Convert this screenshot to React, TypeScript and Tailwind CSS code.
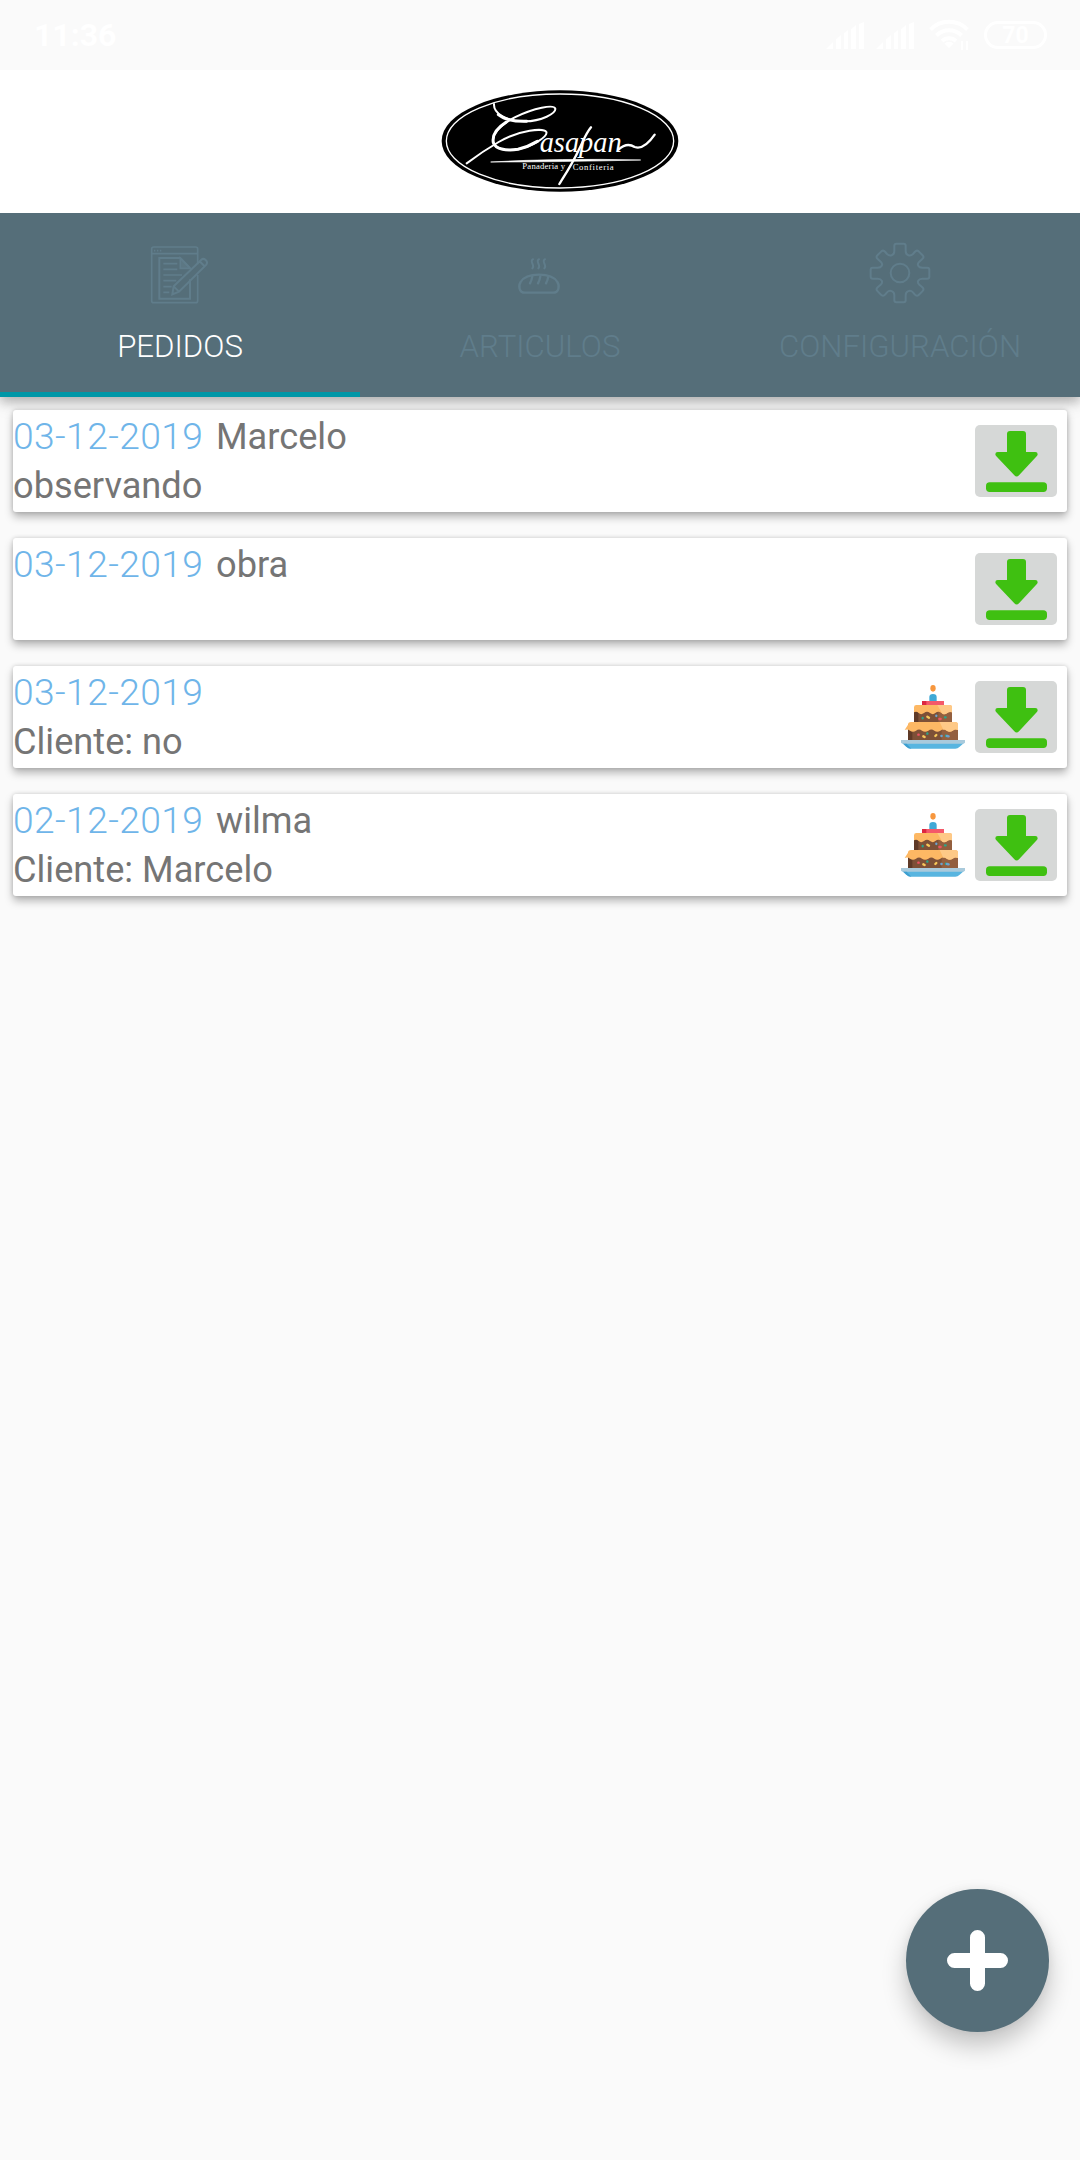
import type { ReactNode } from "react";

type Order = { date: string; name?: string; note?: string; cake?: boolean };

const orders: Order[] = [
  { date: "03-12-2019", name: "Marcelo", note: "observando" },
  { date: "03-12-2019", name: "obra" },
  { date: "03-12-2019", note: "Cliente: no", cake: true },
  { date: "02-12-2019", name: "wilma", note: "Cliente: Marcelo", cake: true },
];

function SignalIcon() {
  return (
    <svg className="h-[27px] w-[38px]" viewBox="0 0 38 27" fill="currentColor">
      <path d="M0 27l7-7v7zM10 17l5-4v14h-5zM18 11l4-3v19h-4zM25 7l5-4v24h-5zM33 2l5-2v27h-5z" />
    </svg>
  );
}

function WifiIcon() {
  return (
    <svg className="h-[32px] w-[40px]" viewBox="0 0 40 32" fill="none" stroke="currentColor" strokeWidth="4">
      <path d="M1.500 10.500a26 26 0 0 1 37 0M7.500 16.500a17.500 17.500 0 0 1 25 0M13 22a10 10 0 0 1 14 0" />
      <path d="M15.500 24.500a6.500 6.500 0 0 1 9 0L20 29z" fill="currentColor" stroke="none" />
      <path d="M33 22v9M38 22v9" strokeWidth="2" />
    </svg>
  );
}

function StatusBar() {
  return (
    <div className="flex h-[70px] items-center justify-between pr-[33px] pl-[34px] text-white">
      <span className="text-[32px] leading-none font-bold">11:36</span>
      <div className="flex items-center">
        <SignalIcon />
        <span className="w-3" />
        <SignalIcon />
        <span className="w-[15px]" />
        <WifiIcon />
        <span className="ml-[15px] flex h-[28px] w-[63px] items-center justify-center rounded-full border-[3px] border-white text-[23px] leading-none font-bold">
          70
        </span>
      </div>
    </div>
  );
}

function Logo() {
  return (
    <svg className="ml-10 h-[102px] w-[238px]" viewBox="33 30 714 306">
      <ellipse cx="390" cy="183" rx="355" ry="152" fill="#000" />
      <ellipse cx="390" cy="183" rx="341" ry="141" fill="none" stroke="#fff" strokeWidth="4" />
      <g fill="none" stroke="#fff" strokeLinecap="round">
        <path
          d="M192 72C190 98 225 124 284 124C335 124 378 100 376 86C372 72 312 84 254 112C205 138 184 166 190 188C196 207 226 214 264 208C312 198 354 168 349 156C342 144 270 148 206 186C170 207 142 226 110 250"
          strokeWidth="6"
        />
        <path
          d="M205 104C225 120 255 125 290 124M228 127C198 146 186 166 190 188C196 207 226 213 264 208C285 203 305 194 322 184"
          strokeWidth="9"
        />
        <path d="M483 142C468 160 460 182 448 206C430 246 408 280 388 312" strokeWidth="7" />
        <path d="M566 208C584 192 600 192 614 201C634 208 652 196 674 164" strokeWidth="7" />
      </g>
      <path d="M182 246Q390 234 632 240Q390 246 182 246Z" fill="#fff" stroke="#fff" strokeWidth="2" />
      <text
        x="329"
        y="216"
        fill="#fff"
        fontFamily="Liberation Serif, serif"
        fontStyle="italic"
        fontSize="88"
        textLength="246"
        lengthAdjust="spacingAndGlyphs"
      >
        asapan
      </text>
      <g fill="#fff" fontFamily="Liberation Serif, serif" fontSize="26">
        <text x="277" y="268" textLength="128" lengthAdjust="spacing">
          Panaderia y
        </text>
        <text x="428" y="270" textLength="123" lengthAdjust="spacing">
          Confiteria
        </text>
      </g>
    </svg>
  );
}

function NotesIcon() {
  return (
    <svg className="relative -left-px h-[60px] w-[60px]" viewBox="0 0 180 180" fill="none" stroke="currentColor" strokeWidth="5">
      <path d="M146 61V15q0-6-6-6H14q-6 0-6 6v155q0 6 6 6h126q6 0 6-6V93M8 29h138" />
      <path d="M15 20h4M24 20h4M33 20h4" strokeWidth="5" />
      <path d="M123 72L94 42H31v122h92v-58" strokeWidth="6" />
      <path d="M94 42v31h30z" fill="currentColor" fillOpacity=".6" />
      <path d="M43 59h42M43 76h42M43 93h56M43 110h39M43 128h25M43 145h18" />
      <path d="M74 127L157 47q6-5 13 1t2 14L90 143l-20 8zM151 51l15 15M74 127l16 16" strokeWidth="6" />
    </svg>
  );
}

function BreadIcon() {
  return (
    <svg
      className="relative -left-px h-[60px] w-[60px]"
      viewBox="0 0 180 180"
      fill="none"
      stroke="currentColor"
      strokeWidth="7"
      strokeLinecap="round"
    >
      <path d="M48 146c-19 0-20-22-13-32c9-15 28-22 55-22s46 7 55 22c7 10 6 32-13 32z" />
      <path d="M70 97q-2 12-7 21M94 97q-2 12-7 21M118 97q-2 12-7 21" />
      <path
        d="M72 46c-4 1-5 6-2 12s4 11 0 15M90 46c-4 1-5 6-2 12s4 11 0 15M108 46c-4 1-5 6-2 12s4 11 0 15"
        strokeWidth="6"
      />
    </svg>
  );
}

function GearIcon() {
  return (
    <svg
      className="relative -top-px h-[62px] w-[62px]"
      viewBox="-93 -93 186 186"
      fill="none"
      stroke="currentColor"
      strokeWidth="6"
      strokeLinejoin="round"
    >
      <circle r="28" />
      <path d="M-17 -82Q-17 -88 -11 -88H11Q17 -88 17 -82V-66C17 -52 31 -49 39 -57L44 -63Q50 -70 56 -65L67 -54Q74 -48 67 -42L58 -34C49 -26 55 -16 67 -16H82Q88 -16 88 -10V11Q88 17 82 17H67C55 17 49 27 58 35L67 43Q74 49 67 55L56 66Q50 71 44 64L39 58C31 50 17 53 17 67V82Q17 88 11 88H-11Q-17 88 -17 82V67C-17 53 -31 50 -39 58L-44 64Q-50 71 -56 66L-67 55Q-74 49 -67 43L-58 35C-49 27 -55 17 -67 17H-82Q-88 17 -88 11V-10Q-88 -16 -82 -16H-67C-55 -16 -49 -26 -58 -34L-67 -42Q-74 -48 -67 -54L-56 -65Q-50 -70 -44 -63L-39 -57C-31 -49 -17 -52 -17 -66Z" />
    </svg>
  );
}

function Tab({ label, icon, active }: { label: string; icon: ReactNode; active?: boolean }) {
  return (
    <div
      className={
        active
          ? "flex flex-1 flex-col items-center border-b-[5px] border-[#0097a7] pt-[30px]"
          : "flex flex-1 flex-col items-center border-b-[5px] border-transparent pt-[30px]"
      }
    >
      <div className="flex h-[62px] items-center text-[#607d8b]">{icon}</div>
      <span
        className={
          active
            ? "mt-6 text-[31.2px] leading-[36px] font-light text-white"
            : "mt-6 text-[31.2px] leading-[36px] font-light text-[#607d8b]"
        }
      >
        {label}
      </span>
    </div>
  );
}

function CakeIcon() {
  return (
    <svg className="h-16 w-16" viewBox="0 0 192 192">
      <ellipse cx="96" cy="10" rx="8" ry="10" fill="#f7973e" />
      <path d="M85 50V36q0-9 11-9t11 9v14z" fill="#3fa9d6" />
      <path d="M63 48h66v14H63z" fill="#f4596a" />
      <path d="M63 48h13v14H63z" fill="#dc2740" />
      <path d="M39 68h114v44H39z" fill="#7d5037" />
      <path d="M39 68h13v44H39z" fill="#5f3a28" />
      <path d="M21 118h150v48H21z" fill="#7d5037" />
      <path d="M21 118h13v48H21z" fill="#5f3a28" />
      <path d="M112 80h41v32h-41zM122 126h49v40h-49z" fill="#935f3f" />
      <path d="M39 67q0-7 7-7h100q7 0 7 7v15q-8-3-14 2q-9 8-18 0t-18 0q-7 7-16 0t-18 0q-9 7-16 0t-14-2z" fill="#fdb864" />
      <path d="M109 60h37q7 0 7 7v15q-8-3-14 2q-8 6-15 2z" fill="#fec987" />
      <path
        d="M21 119q0-8 9-8h132q9 0 9 8v16q-8-4-16 2q-9 6-18 0q-10-7-19 0q-9 6-18 0q-9-7-18 0q-10 6-19 0q-9-7-18 0q-9 6-18 0q-8-6-16-2z"
        fill="#fdb864"
      />
      <path d="M116 111h46q9 0 9 8v16q-8-4-16 2q-9 6-18 0q-5-4-10-3z" fill="#fec987" />
      <g strokeWidth="7" strokeLinecap="round">
        <path d="M65 99v1M132 97h2M79 145v1M135 152v1" stroke="#2ba58b" />
        <path d="M79 95l5 3M67 154l4 2M103 153l3-3" stroke="#f7c85a" />
        <path d="M106 92v1M121 153h1M138 153l5 1" stroke="#6ba3cf" />
        <path d="M115 102h4M52 149h1" stroke="#ec5263" />
      </g>
      <path d="M0 165h192v6l-16 14q-6 6-13 6H29q-7 0-13-6L0 171z" fill="#58b5e0" />
      <path d="M0 165h192v6q0 5-7 5H7q-7 0-7-5z" fill="#a9cadc" />
      <path d="M7 176h10l14 15q-9 0-15-6z" fill="#3d9fd0" />
    </svg>
  );
}

function DownloadButton() {
  return (
    <button className="mt-[15px] mr-[10px] h-[72px] w-[82px] shrink-0 rounded-[5px] bg-[#d6d8d7]">
      <svg className="h-[72px] w-[82px]" viewBox="0 0 246 216" fill="#3fc011">
        <path d="M96 27q0-9 9-9h39q9 0 9 9v54h28q7 0 7 7q0 3-3 6l-53 57q-7 7-14 0L64 94q-3-3-3-6q0-7 7-7h28z" />
        <rect x="33" y="172" width="183" height="29" rx="11" />
      </svg>
    </button>
  );
}

function OrderCard({ date, name, note, cake }: Order) {
  return (
    <div className="flex h-[102px] rounded-[3px] bg-white shadow-[0_5px_8px_rgba(0,0,0,0.28),0_0_4px_rgba(0,0,0,0.16)]">
      <div className="flex flex-1 flex-col text-[36.2px] leading-[49px] text-[#757575]">
        <div className="mt-[2px] flex">
          <span className="w-[203px] text-[37.2px] font-light tracking-[0.4px] text-[#6fb5e9]">{date}</span>
          <span>{name}</span>
        </div>
        <div>{note}</div>
      </div>
      {cake && (
        <div className="mt-[19px] mr-[10px]">
          <CakeIcon />
        </div>
      )}
      <DownloadButton />
    </div>
  );
}

export default function App() {
  return (
    <div className="relative h-[2160px] w-[1080px] overflow-hidden bg-[#fafafa] font-['Roboto',sans-serif]">
      <StatusBar />
      <header className="relative z-10 flex h-[143px] justify-center bg-white pt-5">
        <Logo />
      </header>
      <nav className="relative flex h-[184px] bg-[#556e79] shadow-[0_5px_10px_rgba(0,0,0,0.22),0_4px_20px_rgba(0,0,0,0.12)]">
        <Tab label="PEDIDOS" icon={<NotesIcon />} active />
        <Tab label="ARTICULOS" icon={<BreadIcon />} />
        <Tab label="CONFIGURACIÓN" icon={<GearIcon />} />
      </nav>
      <main className="relative flex flex-col gap-[26px] px-[13px] pt-[13px]">
        {orders.map((order, i) => (
          <OrderCard key={i} {...order} />
        ))}
      </main>
      <button className="absolute right-[31px] bottom-[128px] flex h-[143px] w-[143px] items-center justify-center rounded-full bg-[#556e79] shadow-[0_14px_24px_rgba(0,0,0,0.22),0_0_10px_rgba(0,0,0,0.06)]">
        <svg className="h-[61px] w-[61px]" viewBox="0 0 61 61" stroke="#fff" strokeWidth="15" strokeLinecap="round">
          <path d="M30.500 7.500v46M7.500 30.500h46" />
        </svg>
      </button>
    </div>
  );
}
